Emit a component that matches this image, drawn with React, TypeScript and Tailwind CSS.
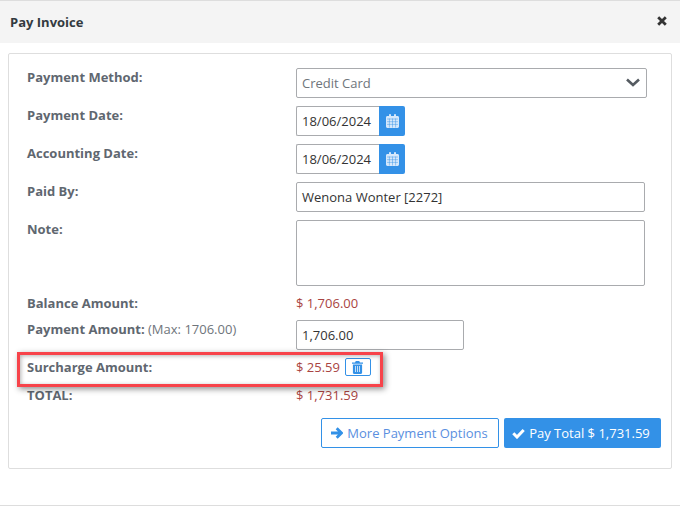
import { ReactNode } from 'react'

function CalendarIcon() {
  return (
    <svg width="13" height="14" viewBox="0 0 13 14" fill="#d6e8fb">
      <path d="M0 3.500C0 2.700.6 2 1.400 2H3V1.200C3 .5 3.400 0 4 0s1 .5 1 1.200V2h3V1.200C8 .5 8.400 0 9 0s1 .5 1 1.200V2h1.600c.8 0 1.400.7 1.400 1.500V12.600c0 .8-.6 1.400-1.400 1.400H1.400C.6 14 0 13.400 0 12.600z" />
      <path d="M1 5h11M1 7.700h11M1 10.400h11M3.400 4.500V13.500M6.500 4.500V13.500M9.600 4.500V13.500" stroke="#3391e7" strokeWidth=".6" strokeOpacity=".75" fill="none" />
    </svg>
  )
}

function TrashIcon() {
  return (
    <svg width="11" height="13" viewBox="0 0 11 13" fill="#3391e7">
      <path d="M3.800 0h3.400l.8 1.400H11v1.300H0V1.400h3zM.9 3.500h9.200V11.800c0 .7-.5 1.200-1.200 1.200H2.100c-.7 0-1.200-.5-1.200-1.200zM3 5v6h.7V5zm2.150 0v6h.7V5zM7.300 5v6H8V5z" fillRule="evenodd" />
    </svg>
  )
}

function ArrowIcon() {
  return (
    <svg width="12" height="12" viewBox="0 0 12 12" fill="none" stroke="#3391e7" strokeWidth="2.800">
      <path d="M0 6h10M5.700 1.300L10.400 6l-4.700 4.700" />
    </svg>
  )
}

function CheckIcon() {
  return (
    <svg width="13" height="11" viewBox="0 0 13 11" fill="none" stroke="#ffffff" strokeWidth="3">
      <path d="M1.300 5.300l3.700 3.700 6.700-7" />
    </svg>
  )
}

function Row({ label, children, className = '' }: { label: ReactNode; children: ReactNode; className?: string }) {
  return (
    <div className={`flex ${className}`}>
      <div className="w-[269px] shrink-0 text-[13px] leading-[18px] font-bold text-[#5f6770]">{label}</div>
      <div className="flex-1 min-w-0">{children}</div>
    </div>
  )
}

function DateField({ value }: { value: string }) {
  return (
    <div className="flex w-[109px] h-[30px]">
      <div className="w-[83px] border border-[#a9abae] border-r-0 rounded-l-[2px] pl-[5px] text-[13px] leading-[28px] text-[#333]">{value}</div>
      <button className="w-[26px] flex items-center justify-center bg-[#3391e7] rounded-r-[2px]">
        <CalendarIcon />
      </button>
    </div>
  )
}

export default function App() {
  return (
    <div className="relative w-[680px] h-[506px] bg-white overflow-hidden font-['Open_Sans',sans-serif] border-t border-[#dddddd]">
      {/* Title bar */}
      <div className="flex items-center justify-between h-[42px] bg-[#f4f4f4] pl-[10px] pr-[13px]">
        <span className="pt-[2px] text-[13px] font-bold text-[#333a40]">Pay Invoice</span>
        <svg width="10" height="10" viewBox="0 0 10 10" className="-mt-[3px]" stroke="#333" strokeWidth="2.800">
          <path d="M1.200 1.200l7.600 7.600M8.800 1.200l-7.600 7.600" />
        </svg>
      </div>

      {/* Panel */}
      <div className="mx-2 mt-[10px] h-[416px] border border-[#dedede] rounded-[2px] pl-[18px] pr-[10px] pt-[14px]">
        <Row label="Payment Method:">
          <div className="flex items-center justify-between w-[351px] h-[30px] border border-[#a9abae] rounded-[2px] pl-[5px] pr-[6px] text-[13px] text-[#6f757b]">
            <span className="pt-[2px]">Credit Card</span>
            <svg width="14" height="9" viewBox="0 0 14 9" className="-mt-[2px]" fill="none" stroke="#555b61" strokeWidth="2.600">
              <path d="M1 1.500l6 5.500 6-5.500" />
            </svg>
          </div>
        </Row>
        <Row label="Payment Date:" className="mt-2">
          <DateField value="18/06/2024" />
        </Row>
        <Row label="Accounting Date:" className="mt-2">
          <DateField value="18/06/2024" />
        </Row>
        <Row label="Paid By:" className="mt-2">
          <div className="w-[349px] h-[30px] border border-[#a9abae] rounded-[2px] pl-[5px] text-[13px] leading-[28px] text-[#333]">Wenona Wonter [2272]</div>
        </Row>
        <Row label="Note:" className="mt-2">
          <div className="w-[349px] h-[66px] border border-[#a9abae] rounded-[2px]" />
        </Row>
        <Row label="Balance Amount:" className="mt-[8px]">
          <span className="block text-[13px] leading-[18px] text-[#a94442]">$ 1,706.00</span>
        </Row>
        <Row
          label={<>Payment Amount: <span className="font-normal text-[#6f757b]">(Max: 1706.00)</span></>}
          className="mt-2"
        >
          <div className="w-[168px] h-[30px] border border-[#a9abae] rounded-[2px] pl-[5px] text-[13px] leading-[28px] text-[#333]">1,706.00</div>
        </Row>
        <Row label="Surcharge Amount:" className="mt-2">
          <div className="flex items-center h-[18px] text-[13px] leading-[18px] text-[#a94442]">
            <span>$ 25.59</span>
            <button className="ml-[5px] w-[26px] h-[18px] flex items-center justify-center border border-[#3391e7] rounded-[2px]">
              <TrashIcon />
            </button>
          </div>
        </Row>
        <Row label="TOTAL:" className="mt-[10px]">
          <span className="block text-[13px] leading-[18px] text-[#a94442]">$ 1,731.59</span>
        </Row>
        <div className="flex justify-end gap-[5px] mt-[14px]">
          <button className="flex items-center justify-center gap-[4px] w-[178px] h-[30px] border border-[#3391e7] rounded-[2px] pr-[1px] text-[13px] text-[#5a8fe0]">
            <ArrowIcon />
            <span className="pt-[2px]">More Payment Options</span>
          </button>
          <button className="flex items-center justify-center gap-[4px] w-[157px] h-[30px] bg-[#3391e7] rounded-[2px] pr-[3px] text-[13px] font-medium text-white">
            <CheckIcon />
            <span className="pt-[2px]">Pay Total $ 1,731.59</span>
          </button>
        </div>
      </div>

      {/* Screenshot annotation around the surcharge row */}
      <div className="absolute left-[17px] top-[351px] w-[366px] h-[35px] border-[3px] border-[#f7434a] shadow-[2px_2px_6px_rgba(0,0,0,0.45),inset_1px_1px_4px_rgba(0,0,0,0.3)]" />

      <div className="absolute left-0 right-0 bottom-0 h-px bg-[#dddddd]" />
    </div>
  )
}
